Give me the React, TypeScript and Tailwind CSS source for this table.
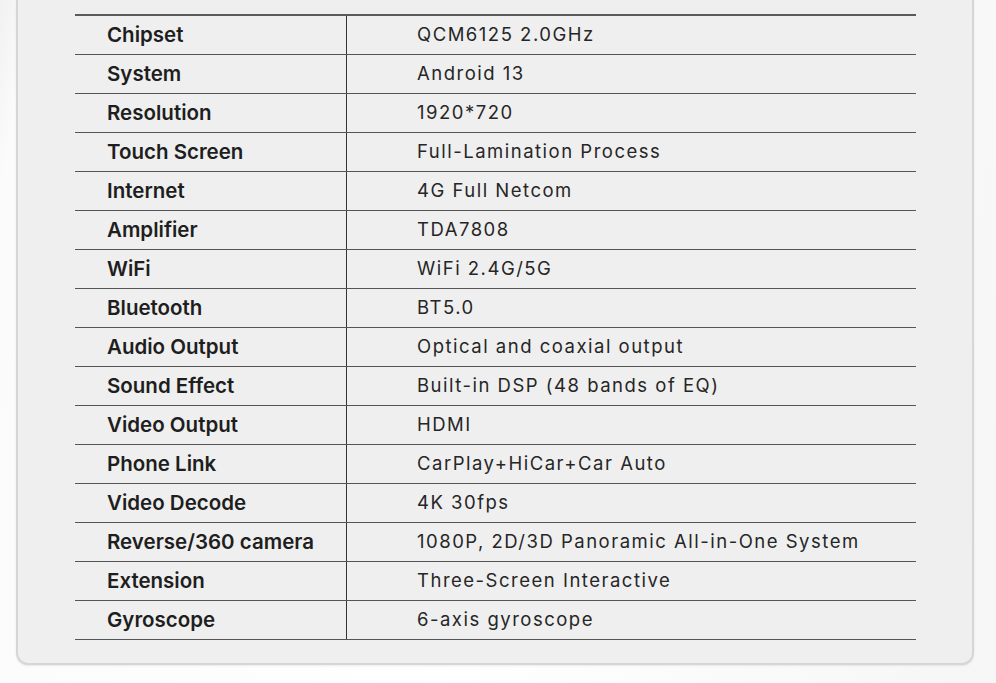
const specs: [string, string][] = [
  ["Chipset", "QCM6125 2.0GHz"],
  ["System", "Android 13"],
  ["Resolution", "1920*720"],
  ["Touch Screen", "Full-Lamination Process"],
  ["Internet", "4G Full Netcom"],
  ["Amplifier", "TDA7808"],
  ["WiFi", "WiFi 2.4G/5G"],
  ["Bluetooth", "BT5.0"],
  ["Audio Output", "Optical and coaxial output"],
  ["Sound Effect", "Built-in DSP (48 bands of EQ)"],
  ["Video Output", "HDMI"],
  ["Phone Link", "CarPlay+HiCar+Car Auto"],
  ["Video Decode", "4K 30fps"],
  ["Reverse/360 camera", "1080P, 2D/3D Panoramic All-in-One System"],
  ["Extension", "Three-Screen Interactive"],
  ["Gyroscope", "6-axis gyroscope"],
];

export default function App() {
  return (
    <div className="h-[683px] w-[996px] overflow-hidden bg-[linear-gradient(100deg,#f1f1f1_0%,#fbfbfb_3%,#ffffff_50%,#f6f6f6_100%)] pl-[16px] pr-[22px]">
      <div className="rounded-b-[12px] border-x-2 border-b-2 border-[#d6d6d6] bg-[#efefef] pl-[57px] pr-[56px] pt-[14px] pb-[23px] shadow-[0_1px_2px_rgba(0,0,0,0.08)]">
        <div className="border-t-2 border-[#5a5a5a]">
          {specs.map(([label, value]) => (
            <div
              key={label}
              className="flex h-[39px] items-center border-b-[1.5px] border-[#555555] text-[#1e1e1e]"
            >
              <div className="flex h-full w-[272px] shrink-0 items-center border-r border-[#333333] pl-[32px] font-['Inter',sans-serif] text-[20.5px] font-semibold">
                {label}
              </div>
              <div className="pl-[70px] font-['Inter',sans-serif] text-[18.5px] font-normal tracking-[1.5px] text-[#262626]">
                {value}
              </div>
            </div>
          ))}
        </div>
      </div>
    </div>
  );
}
